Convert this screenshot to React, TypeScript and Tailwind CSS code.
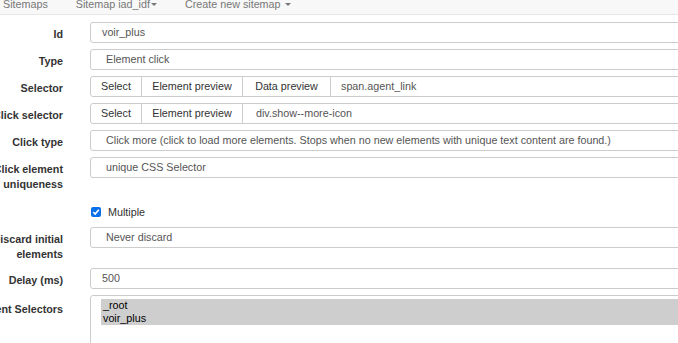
import React from 'react';

const font = { fontFamily: '"Liberation Sans", Arial, sans-serif' };

function Caret() {
  return (
    <span className="inline-block w-0 h-0 border-l-[3px] border-r-[3px] border-t-[3px] border-l-transparent border-r-transparent border-t-[#777] align-middle" />
  );
}

function Label({ children, pt = 'pt-[5px]' }: { children: React.ReactNode; pt?: string }) {
  return (
    <div className={`w-[63px] shrink-0 text-right whitespace-nowrap font-bold text-[#333] leading-[15px] ${pt} flex flex-col items-end`}>
      {children}
    </div>
  );
}

function TextBox({ value, pl = 'pl-[11px]' }: { value: string; pl?: string }) {
  return (
    <div className={`flex-1 h-[21px] border border-[#ccc] rounded-[3px] bg-white flex items-center text-[#555] ${pl}`}>
      {value}
    </div>
  );
}

function Btn({ label, w, first }: { label: string; w: string; first?: boolean }) {
  return (
    <div
      className={`${w} h-[21px] shrink-0 border border-[#ccc] bg-white text-[#333] flex items-center justify-center ${
        first ? 'rounded-l-[3px]' : '-ml-px'
      }`}
    >
      {label}
    </div>
  );
}

function Row({ children, className = '' }: { children: React.ReactNode; className?: string }) {
  return <div className={`flex items-start mb-[6px] ${className}`}>{children}</div>;
}

export default function App() {
  return (
    <div className="w-[678px] h-[343px] overflow-hidden bg-white text-[10.75px]" style={font}>
      <div className="w-[720px]">
        {/* navbar, scrolled so its top is cut */}
        <div className="h-[15px] bg-[#f8f8f8] border-b border-[#e7e7e7] overflow-hidden">
          <div className="flex gap-[28px] pl-[3px] -mt-[3.5px] leading-[15px] text-[#777]">
            <span>Sitemaps</span>
            <span className="flex items-center gap-[1px]">
              Sitemap iad_idf
              <Caret />
            </span>
            <span className="flex items-center gap-[4px]">
              Create new sitemap
              <Caret />
            </span>
          </div>
        </div>

        <div className="pt-[7px]">
          <Row>
            <Label>Id</Label>
            <div className="flex-1 ml-[27px] flex">
              <TextBox value="voir_plus" />
            </div>
          </Row>
          <Row>
            <Label>Type</Label>
            <div className="flex-1 ml-[27px] flex">
              <TextBox value="Element click" pl="pl-[15px]" />
            </div>
          </Row>
          <Row>
            <Label>Selector</Label>
            <div className="flex-1 ml-[27px] flex">
              <Btn label="Select" w="w-[52px]" first />
              <Btn label="Element preview" w="w-[102px]" />
              <Btn label="Data preview" w="w-[89px]" />
              <div className="-ml-px flex-1 h-[21px] border border-[#ccc] rounded-r-[3px] flex items-center pl-[10px] text-[#555]">
                span.agent_link
              </div>
            </div>
          </Row>
          <Row>
            <Label>Click selector</Label>
            <div className="flex-1 ml-[27px] flex">
              <Btn label="Select" w="w-[52px]" first />
              <Btn label="Element preview" w="w-[102px]" />
              <div className="-ml-px flex-1 h-[21px] border border-[#ccc] rounded-r-[3px] flex items-center pl-[13px] text-[#555]">
                div.show--more-icon
              </div>
            </div>
          </Row>
          <Row>
            <Label>Click type</Label>
            <div className="flex-1 ml-[27px] flex">
              <TextBox
                value="Click more (click to load more elements. Stops when no new elements with unique text content are found.)"
                pl="pl-[15px]"
              />
            </div>
          </Row>
          <Row>
            <Label>
              <span>Click element</span>
              <span>uniqueness</span>
            </Label>
            <div className="flex-1 ml-[27px] flex">
              <TextBox value="unique CSS Selector" pl="pl-[15px]" />
            </div>
          </Row>
          <Row className="h-[23px]">
            <div className="w-[63px] shrink-0" />
            <div className="ml-[28px] pt-[9px] flex items-center gap-[7px] text-[#333] leading-[10px]">
              <span className="w-[10px] h-[10px] rounded-[2px] bg-[#0a6fe8] flex items-center justify-center">
                <svg width="8" height="8" viewBox="0 0 8 8">
                  <path d="M1.3 4.2 L3.2 6 L6.8 1.8" stroke="white" strokeWidth="1.6" fill="none" />
                </svg>
              </span>
              <span>Multiple</span>
            </div>
          </Row>
          <Row>
            <Label>
              <span>Discard initial</span>
              <span>elements</span>
            </Label>
            <div className="flex-1 ml-[27px] flex">
              <TextBox value="Never discard" pl="pl-[15px]" />
            </div>
          </Row>
          <Row>
            <Label>Delay (ms)</Label>
            <div className="flex-1 ml-[27px] flex">
              <TextBox value="500" />
            </div>
          </Row>
          <Row>
            <Label pt="pt-[6.5px]">Parent Selectors</Label>
            <div className="flex-1 ml-[27px] flex">
              <div className="flex-1 h-[80px] border border-[#ccc] rounded-[3px] pl-[10px] pt-[3px] text-black leading-[13px]">
                <div className="bg-[#cecece] pl-[2px]">_root</div>
                <div className="bg-[#cecece] pl-[2px]">voir_plus</div>
              </div>
            </div>
          </Row>
        </div>
      </div>
    </div>
  );
}
